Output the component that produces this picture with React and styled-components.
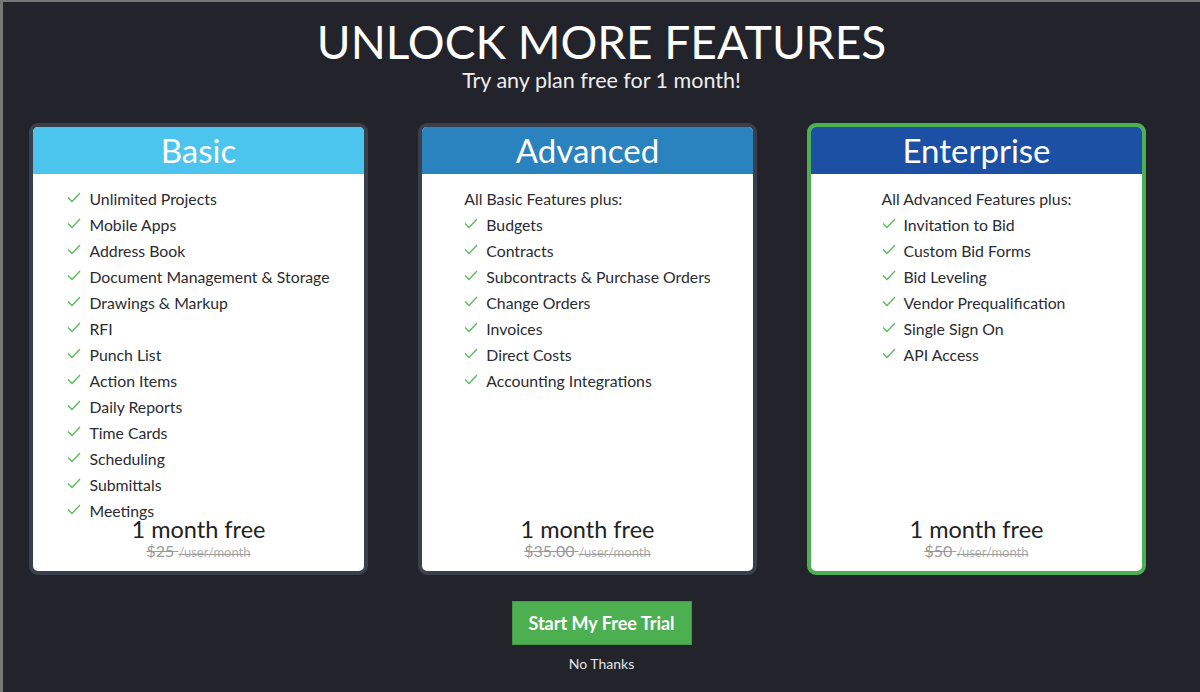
import React from "react";
import styled, { createGlobalStyle } from "styled-components";

const GlobalStyle = createGlobalStyle`
  html, body {
    margin: 0;
    padding: 0;
    background: #767877;
    font-family: Lato, "Open Sans", "Liberation Sans", sans-serif;
    overflow: hidden;
  }
`;

const plans = [
  {
    name: "Basic",
    color: "#4bc4ee",
    border: "#3a3f4c",
    intro: null,
    features: [
      "Unlimited Projects",
      "Mobile Apps",
      "Address Book",
      "Document Management & Storage",
      "Drawings & Markup",
      "RFI",
      "Punch List",
      "Action Items",
      "Daily Reports",
      "Time Cards",
      "Scheduling",
      "Submittals",
      "Meetings",
    ],
    price: "$25",
  },
  {
    name: "Advanced",
    color: "#2a82be",
    border: "#3a3f4c",
    intro: "All Basic Features plus:",
    features: [
      "Budgets",
      "Contracts",
      "Subcontracts & Purchase Orders",
      "Change Orders",
      "Invoices",
      "Direct Costs",
      "Accounting Integrations",
    ],
    price: "$35.00",
  },
  {
    name: "Enterprise",
    color: "#1b50a5",
    border: "#4caf50",
    intro: "All Advanced Features plus:",
    features: [
      "Invitation to Bid",
      "Custom Bid Forms",
      "Bid Leveling",
      "Vendor Prequalification",
      "Single Sign On",
      "API Access",
    ],
    price: "$50",
  },
];

const Check = () => (
  <svg width="14" height="11" viewBox="0 0 14 11">
    <polyline
      points="1,5.5 5,9.5 13,1"
      fill="none"
      stroke="#5cb85c"
      strokeWidth="1.3"
    />
  </svg>
);

const App = () => {
  return (
    <>
      <GlobalStyle />
      <Modal>
        <Title>UNLOCK MORE FEATURES</Title>
        <Subtitle>Try any plan free for 1 month!</Subtitle>
        <Cards>
          {plans.map((p) => (
            <Card key={p.name} $border={p.border}>
              <Header $color={p.color}>{p.name}</Header>
              <Body>
                <List>
                  {p.intro && <Intro>{p.intro}</Intro>}
                  {p.features.map((f) => (
                    <Item key={f}>
                      <Check />
                      <span>{f}</span>
                    </Item>
                  ))}
                </List>
                <Price>
                  <Free>1 month free</Free>
                  <Old>
                    {p.price} <small>/user/month</small>
                  </Old>
                </Price>
              </Body>
            </Card>
          ))}
        </Cards>
        <Actions>
          <TrialButton>Start My Free Trial</TrialButton>
          <NoThanks>No Thanks</NoThanks>
        </Actions>
      </Modal>
    </>
  );
};

const Modal = styled.div`
  margin: 2px 0 0 3px;
  height: 690px;
  background: #22232b;
  padding-top: 17px;
  box-sizing: border-box;
  display: flex;
  flex-direction: column;
  align-items: center;
`;

const Title = styled.h1`
  margin: 0;
  font-size: 46px;
  line-height: 46px;
  font-weight: 400;
  color: #fff;
`;

const Subtitle = styled.div`
  margin-top: 3px;
  font-size: 21.5px;
  line-height: 24px;
  color: #eee;
`;

const Cards = styled.div`
  align-self: stretch;
  display: flex;
  gap: 50px;
  padding-left: 26px;
  margin-top: 31px;
`;

const Card = styled.div`
  width: 339px;
  height: 452px;
  box-sizing: border-box;
  border: 4px solid ${({ $border }) => $border};
  border-radius: 9px;
  background: #fff;
  display: flex;
  flex-direction: column;
  overflow: hidden;
`;

const Header = styled.div`
  height: 47px;
  background: ${({ $color }) => $color};
  color: #fff;
  font-size: 33px;
  line-height: 47px;
  text-align: center;
`;

const Body = styled.div`
  flex: 1;
  display: grid;
  grid-template-areas: "stack";
`;

const List = styled.ul`
  grid-area: stack;
  align-self: start;
  justify-self: center;
  list-style: none;
  margin: 0;
  padding: 12px 0 0;
  font-size: 15.8px;
  line-height: 26px;
  color: #2b2b30;
`;

const Intro = styled.li``;

const Item = styled.li`
  display: flex;
  align-items: center;
  gap: 8px;
  svg {
    margin-top: -3px;
  }
`;

const Price = styled.div`
  grid-area: stack;
  align-self: end;
  text-align: center;
  padding-bottom: 10px;
`;

const Free = styled.div`
  font-size: 23.5px;
  line-height: 26px;
  color: #222;
`;

const Old = styled.div`
  font-size: 16px;
  line-height: 18px;
  color: #9a9a9a;
  text-decoration: line-through;
  small {
    font-size: 13px;
    color: #b0b0b0;
  }
`;

const Actions = styled.div`
  margin-top: 26px;
  display: flex;
  flex-direction: column;
  align-items: center;
`;

const TrialButton = styled.button`
  width: 180px;
  height: 44px;
  background: #4caf50;
  border: 1px solid #3f9a43;
  color: #fff;
  font-family: Lato, "Liberation Sans", sans-serif;
  font-size: 18px;
  font-weight: 700;
  cursor: pointer;
`;

const NoThanks = styled.div`
  margin-top: 11px;
  font-size: 14px;
  line-height: 16px;
  color: #e4e4e4;
`;

export default App;
